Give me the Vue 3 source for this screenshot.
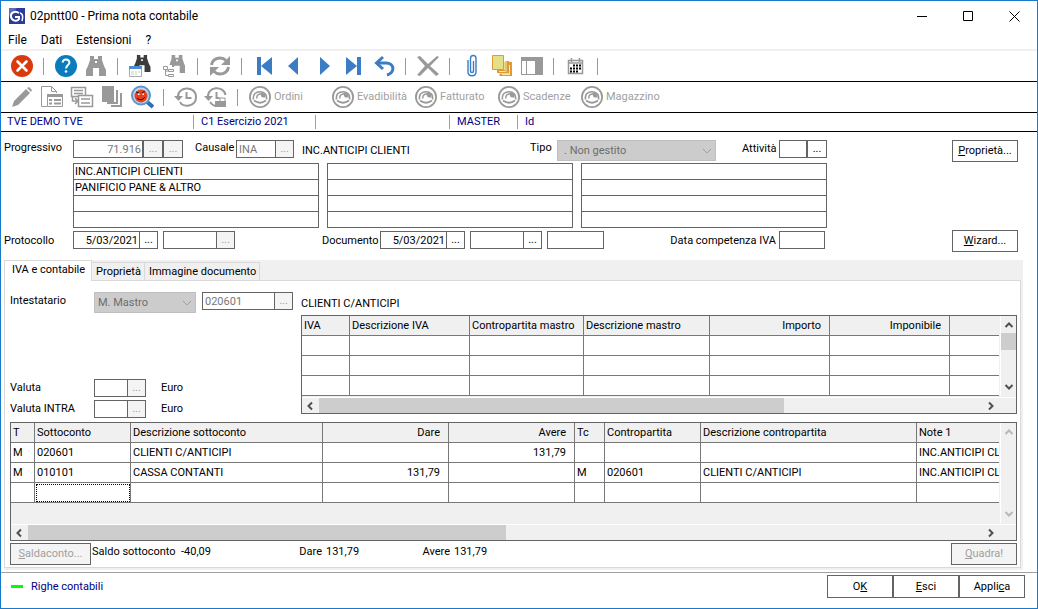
<script setup>
import { ref } from 'vue'

const menu = ['File', 'Dati', 'Estensioni', '?']

const mainTools = [
  { icon: 'close', label: 'Chiudi' }, null,
  { icon: 'help', label: 'Aiuto' }, { icon: 'find', label: 'Cerca' }, null,
  { icon: 'find-window', label: 'Cerca in finestra' }, { icon: 'find-tree', label: 'Cerca in albero', wide: true }, null,
  { icon: 'refresh', label: 'Aggiorna' }, null,
  { icon: 'first', label: 'Primo' }, { icon: 'prev', label: 'Precedente' }, { icon: 'next', label: 'Successivo' },
  { icon: 'last', label: 'Ultimo' }, { icon: 'undo', label: 'Annulla' }, null,
  { icon: 'delete', label: 'Elimina' }, null,
  { icon: 'clip', label: 'Allegati' }, { icon: 'notes', label: 'Note' }, { icon: 'panel', label: 'Pannello' }, null,
  { icon: 'calendar', label: 'Calendario' }, null,
]

const editTools = [
  { icon: 'pencil', label: 'Modifica' }, { icon: 'sheet', label: 'Scheda' }, { icon: 'forward', label: 'Riporta' },
  { icon: 'copies', label: 'Copie' }, { icon: 'inspect', label: 'Ispeziona' }, null,
  { icon: 'history', label: 'Storico' }, { icon: 'history-lock', label: 'Storico bloccato' }, null,
]

const links = ['Ordini', 'Evadibilità', 'Fatturato', 'Scadenze', 'Magazzino']

const notes = ref([
  ['INC.ANTICIPI CLIENTI', 'PANIFICIO PANE & ALTRO', '', ''],
  ['', '', '', ''],
  ['', '', '', ''],
])

const tabs = ['IVA e contabile', 'Proprietà', 'Immagine documento']
const activeTab = ref(0)

const ivaCols = [
  { label: 'IVA', width: 48 },
  { label: 'Descrizione IVA', width: 120 },
  { label: 'Contropartita mastro', width: 114 },
  { label: 'Descrizione mastro', width: 126 },
  { label: 'Importo', width: 120, num: true },
  { label: 'Imponibile', width: 120, num: true },
  { label: '', width: 120 },
]

const rowCols = [
  { label: 'T', width: 24 },
  { label: 'Sottoconto', width: 96 },
  { label: 'Descrizione sottoconto', width: 192 },
  { label: 'Dare', width: 126, num: true },
  { label: 'Avere', width: 126, num: true },
  { label: 'Tc', width: 30 },
  { label: 'Contropartita', width: 96 },
  { label: 'Descrizione contropartita', width: 216 },
  { label: 'Note 1', width: 192 },
]

const rows = [
  ['M', '020601', 'CLIENTI C/ANTICIPI', '', '131,79', '', '', '', 'INC.ANTICIPI CLIENTI'],
  ['M', '010101', 'CASSA CONTANTI', '131,79', '', 'M', '020601', 'CLIENTI C/ANTICIPI', 'INC.ANTICIPI CLIENTI'],
  ['', '', '', '', '', '', '', '', ''],
]
</script>

<template>
  <svg class="sprite" aria-hidden="true">
    <symbol id="close" viewBox="0 0 24 24">
      <circle cx="12" cy="12" r="11" fill="#d93a0b" />
      <path d="M7.500 7.500l9 9M16.500 7.500l-9 9" stroke="#fff" stroke-width="2.600" stroke-linecap="round" />
    </symbol>
    <symbol id="help" viewBox="0 0 24 24">
      <circle cx="12" cy="12" r="11" fill="#0a7cbc" />
      <path d="M8.500 8.500q.5-3 3.500-3t3.500 3c0 2.500-3.500 2.500-3.500 6" fill="none" stroke="#fff" stroke-width="2" />
      <circle cx="12" cy="17.500" r="1.300" fill="#fff" />
    </symbol>
    <symbol id="binoculars" viewBox="0 0 20 20">
      <path d="M4 0h4v3h4V0h4v4l2 6 2 4v6h-7v-8H7v8H0v-6l2-4 2-6z" />
      <path d="M9 5h2v2H9z" fill="#fff" />
    </symbol>
    <symbol id="find" viewBox="0 0 24 24">
      <use href="#binoculars" x="2" y="2" width="20" height="20" fill="#999" />
    </symbol>
    <symbol id="find-window" viewBox="0 0 24 24">
      <use href="#binoculars" x="5" y="1" width="18" height="17" fill="#3c3c3c" />
      <path d="M1.500 12.500h12v10h-12z" fill="#fff" stroke="#aaa" />
      <path d="M1 12h13v3H1z" fill="#4a8fd0" />
      <path d="M3 18h3M7 18h2M10 18h2M3 20h3M7 20h2" stroke="#c8c8c8" />
    </symbol>
    <symbol id="find-tree" viewBox="0 0 24 24">
      <use href="#binoculars" x="7" y="1" width="18" height="18" fill="#999" />
      <path d="M1 11h10v2h3v10H1z" fill="#fff" />
      <path d="M2.500 12.500h4v3h-4zM7.500 15.500h5v2h-5zM7.500 20.500h5v2h-5zM4.500 15.500v6h3M4.500 17h3" fill="none" stroke="#999" />
    </symbol>
    <symbol id="refresh" viewBox="0 0 24 24">
      <path d="M3.500 11C4 6.500 8 4 12 4c2.500 0 4.500 1 6 2.500M20.500 13c-.5 4.500-4.500 7-8.500 7-2.500 0-4.500-1-6-2.500" fill="none" stroke="#999" stroke-width="3" />
      <path d="M22 2v9h-9zM2 22v-9h9z" fill="#999" />
    </symbol>
    <symbol id="first" viewBox="0 0 24 24">
      <path d="M5 3h4v18H5zM20 3v18L9 12z" fill="#3b7cc4" />
    </symbol>
    <symbol id="prev" viewBox="0 0 24 24">
      <path d="M16 3v18L6 12z" fill="#3b7cc4" />
    </symbol>
    <symbol id="next" viewBox="0 0 24 24">
      <path d="M8 3v18l10-9z" fill="#3b7cc4" />
    </symbol>
    <symbol id="last" viewBox="0 0 24 24">
      <path d="M15 3h4v18h-4zM4 3v18l11-9z" fill="#3b7cc4" />
    </symbol>
    <symbol id="undo" viewBox="0 0 24 24">
      <path d="M5 9h9c9 0 9 10 1 12" fill="none" stroke="#3b7cc4" stroke-width="3" />
      <path d="M11 3L4.500 9l6.500 6" fill="none" stroke="#3b7cc4" stroke-width="3" />
    </symbol>
    <symbol id="delete" viewBox="0 0 24 24">
      <path d="M1 3l3-1 8 8 9-8 2 1-9 9 9 8-3 2-8-8-8 8-3-1 8-9z" fill="#999" />
    </symbol>
    <symbol id="clip" viewBox="0 0 24 24">
      <path d="M8 6v12c0 5 8 5 8 0V4.500c0-4-5.500-4-5.500 0V17c0 2 3 2 3 0V7" fill="none" stroke="#3b7cc4" stroke-width="1.400" />
    </symbol>
    <symbol id="notes" viewBox="0 0 24 24">
      <path d="M9 8h12v14H9z" fill="#e4e08a" />
      <path d="M15 7h4v12H7v-3h8z" fill="#e09a35" />
      <path d="M19 8h3v14H10v-2h9z" fill="#e09a35" />
      <path d="M9 17h6v1H9zM12 20h7v1h-7zM15.500 7h1v11h-1zM19 11h1v10h-1z" fill="#f0edb0" />
      <path d="M2.500 1.500h11v14h-11z" fill="#e4e08a" stroke="#e09a35" />
    </symbol>
    <symbol id="panel" viewBox="0 0 24 24">
      <path d="M1 3h22v18H1z" fill="#999" />
      <path d="M2 7h4v13H2zM7 7h8v13H7z" fill="#fff" />
    </symbol>
    <symbol id="calendar" viewBox="0 0 24 24">
      <path d="M4.500 6.500h14v13h-14zM4 9h15M7.500 4v4M15.500 4v4" fill="none" stroke="#999" stroke-width="1.500" />
      <path d="M9 11.500h9M6 14.500h12M6 17.500h8" stroke="#000" stroke-width="2" stroke-dasharray="2 1" />
    </symbol>
    <symbol id="pencil" viewBox="0 0 24 24">
      <path d="M2 22l2-6L16 4l4 4L8 20zM17 3l2-1 3 3-1 2z" fill="#999" />
    </symbol>
    <symbol id="sheet" viewBox="0 0 24 24">
      <path d="M7 21.500H1.500v-20h10l5 5V8M11.500 1.500v5h5" fill="none" stroke="#999" />
      <path d="M7.500 9.500h15v12h-15z" fill="#fff" stroke="#999" />
      <path d="M7 9h16v3H7z" fill="#999" />
      <path d="M9 15h3M9 18.500h3M14 15h7M14 18.500h7" stroke="#999" stroke-width="2" />
    </symbol>
    <symbol id="forward" viewBox="0 0 24 24">
      <path d="M1.500 2.500h14v9h-14z" fill="none" stroke="#999" stroke-width="1.500" />
      <path d="M4 5.500h9M4 8.500h9" stroke="#999" stroke-width="1.500" />
      <path d="M8.500 10.500h14v11h-14z" fill="#fff" stroke="#999" stroke-width="1.500" />
      <path d="M11 14h9M11 18h9" stroke="#999" stroke-width="1.500" />
      <path d="M2.500 12v4H7M5 13l3 3-3 3" fill="none" stroke="#999" stroke-width="1.500" />
    </symbol>
    <symbol id="copies" viewBox="0 0 24 24">
      <path d="M2 1h12v16H2zM16 5h2v14H7v-2h9zM20 8h2v14H11v-2h9z" fill="#999" />
    </symbol>
    <symbol id="inspect" viewBox="0 0 24 24">
      <path d="M16 16l7 6" stroke="#2f6fb5" stroke-width="4" />
      <circle cx="11" cy="10.500" r="9" fill="#b9d6ee" stroke="#5f95cc" stroke-width="2" />
      <circle cx="11" cy="11" r="6.500" fill="#e8401c" />
      <path d="M6 7l3 1M15 6l-3 2M7 13q4 4 8-1" fill="none" stroke="#3a0a00" />
      <path d="M8 8.500h1.500V10H8zM12.500 8.500H14V10h-1.500z" fill="#fff" />
    </symbol>
    <symbol id="history" viewBox="0 0 24 24">
      <path d="M4 13C2.500 1 22 0 22 12c0 10-13 11-16 5" fill="none" stroke="#999" stroke-width="2" />
      <path d="M0 11h9l-4.500 5z" fill="#999" />
      <path d="M12.500 7v6h5" fill="none" stroke="#999" stroke-width="2" />
    </symbol>
    <symbol id="history-lock" viewBox="0 0 24 24">
      <path d="M4 13C2.500 1 20 0 21.500 10M6 17q2 3 5 4" fill="none" stroke="#999" stroke-width="2" />
      <path d="M0 11h9l-4.500 5z" fill="#999" />
      <path d="M12.500 7v6h3" fill="none" stroke="#999" stroke-width="2" />
      <path d="M11 16h11v6H11z" fill="#999" />
      <path d="M16 16v-3h5v3" fill="none" stroke="#999" />
    </symbol>
    <symbol id="gauge" viewBox="0 0 24 24">
      <circle cx="12" cy="12" r="10.100" fill="none" stroke="#999" stroke-width="1.800" />
      <path d="M5.500 14.500C3.500 4 20.500 4 18.500 14.500" fill="none" stroke="#999" stroke-width="1.500" />
      <path d="M6 15.500q6 4.500 12 0" fill="none" stroke="#999" stroke-width="1.800" />
      <path d="M9 13.500q-1-3.500 3-4.500" fill="none" stroke="#999" stroke-width="1.500" />
      <path d="M11.500 8.500q3-2 6 1v3h-2.500q-2 0-2-2z" fill="#999" />
    </symbol>
    <symbol id="chevron" viewBox="0 0 10 10">
      <path d="M1 3l4 4 4-4" fill="none" stroke="currentColor" />
    </symbol>
    <symbol id="arrow-up" viewBox="0 0 10 10">
      <path d="M1.500 7L5 3.500 8.500 7" fill="none" stroke="currentColor" stroke-width="2" />
    </symbol>
    <symbol id="arrow-down" viewBox="0 0 10 10">
      <path d="M1.500 3L5 6.500 8.500 3" fill="none" stroke="currentColor" stroke-width="2" />
    </symbol>
    <symbol id="arrow-left" viewBox="0 0 10 10">
      <path d="M7 1.500L3.500 5 7 8.500" fill="none" stroke="currentColor" stroke-width="2" />
    </symbol>
    <symbol id="arrow-right" viewBox="0 0 10 10">
      <path d="M3 1.500L6.500 5 3 8.500" fill="none" stroke="currentColor" stroke-width="2" />
    </symbol>
  </svg>

  <div class="window">
    <header class="titlebar">
      <svg class="logo" viewBox="0 0 16 16" aria-hidden="true">
        <path d="M0 0h16v16H0z" fill="#2b3a9b" />
        <path d="M0 8l8-8H0z" fill="#5a6cc0" />
        <path d="M10 5C6 2 1 5 2 9s6 5 8 2V9H6" fill="none" stroke="#fff" stroke-width="2" />
        <path d="M11 5q4 1 2 8" fill="none" stroke="#fff" stroke-width="1.500" />
      </svg>
      <h1>02pntt00 - Prima nota contabile</h1>
      <div class="captions">
        <button type="button" aria-label="Riduci a icona">
          <svg viewBox="0 0 11 11"><path d="M0 5.500h10" stroke="#000" /></svg>
        </button>
        <button type="button" aria-label="Ingrandisci">
          <svg viewBox="0 0 11 11"><path d="M.5.5h9v9h-9z" fill="none" stroke="#000" /></svg>
        </button>
        <button type="button" aria-label="Chiudi finestra">
          <svg viewBox="0 0 11 11"><path d="M.5.5l10 10M10.500.5l-10 10" stroke="#000" /></svg>
        </button>
      </div>
    </header>

    <nav class="menu">
      <button v-for="item in menu" :key="item" type="button">{{ item }}</button>
    </nav>

    <div class="toolbar">
      <template v-for="(tool, i) in mainTools" :key="i">
        <button v-if="tool" type="button" class="tool" :class="{ wide: tool.wide }" :aria-label="tool.label">
          <svg><use :href="'#' + tool.icon" /></svg>
        </button>
        <span v-else class="sep"></span>
      </template>
    </div>

    <div class="toolbar">
      <template v-for="(tool, i) in editTools" :key="i">
        <button v-if="tool" type="button" class="tool" :aria-label="tool.label">
          <svg><use :href="'#' + tool.icon" /></svg>
        </button>
        <span v-else class="sep"></span>
      </template>
      <button v-for="link in links" :key="link" type="button" class="tool link">
        <svg><use href="#gauge" /></svg>
        {{ link }}
      </button>
    </div>

    <div class="info">
      <span class="company">TVE DEMO TVE</span>
      <span class="year">C1 Esercizio 2021</span>
      <span class="blank"></span>
      <span class="user">MASTER</span>
      <span>Id</span>
    </div>

    <section class="head">
      <div class="head-main">
        <label for="progressivo">Progressivo</label>
        <div class="line">
          <div class="field apart">
            <input id="progressivo" class="w70 num" value="71.916" disabled>
            <button type="button" disabled aria-label="Cerca progressivo">...</button>
            <button type="button" disabled aria-label="Altri progressivi">...</button>
          </div>
          <label for="causale" class="causale">Causale</label>
          <div class="field">
            <input id="causale" class="w40" value="INA" disabled>
            <button type="button" disabled aria-label="Cerca causale">...</button>
          </div>
          <span class="desc">INC.ANTICIPI CLIENTI</span>
          <label for="tipo" class="tipo">Tipo</label>
          <div class="select tipo-select">
            <select id="tipo" disabled>
              <option>. Non gestito</option>
            </select>
            <svg><use href="#chevron" /></svg>
          </div>
          <label for="attivita" class="attivita">Attività</label>
          <div class="field apart">
            <input id="attivita" class="w28">
            <button type="button" aria-label="Cerca attività">...</button>
          </div>
        </div>

        <div class="notes">
          <div v-for="(col, c) in notes" :key="c" class="note">
            <input v-for="(text, r) in col" :key="r" v-model="col[r]" :aria-label="`Nota ${c + 1}.${r + 1}`">
          </div>
        </div>

        <label for="protocollo" class="low">Protocollo</label>
        <div class="line">
          <div class="field">
            <input id="protocollo" class="w67 num" value="5/03/2021">
            <button type="button" aria-label="Scegli data protocollo">...</button>
          </div>
          <div class="field next">
            <input class="w54" aria-label="Numero protocollo">
            <button type="button" disabled aria-label="Cerca protocollo">...</button>
          </div>
          <label for="documento" class="documento low">Documento</label>
          <div class="field">
            <input id="documento" class="w67 num" value="5/03/2021">
            <button type="button" aria-label="Scegli data documento">...</button>
          </div>
          <div class="field next">
            <input class="w54" aria-label="Numero documento">
            <button type="button" aria-label="Cerca documento">...</button>
          </div>
          <div class="field next">
            <input class="w57" aria-label="Serie documento">
          </div>
          <label for="competenza" class="competenza low">Data competenza IVA</label>
          <div class="field competenza-field">
            <input id="competenza" class="w46">
          </div>
        </div>
      </div>
      <div class="head-side">
        <button type="button" class="btn"><span><u>P</u>roprietà...</span></button>
        <button type="button" class="btn"><span><u>W</u>izard...</span></button>
      </div>
    </section>

    <section class="tabs">
      <div class="tablist" role="tablist">
        <button
          v-for="(tab, i) in tabs"
          :key="tab"
          type="button"
          role="tab"
          :class="{ active: i === activeTab }"
          :aria-selected="i === activeTab"
          @click="activeTab = i"
        >{{ tab }}</button>
      </div>

      <div class="panel" role="tabpanel">
        <div class="upper">
          <div class="party">
            <label for="mastro">Intestatario</label>
            <div class="select mastro">
              <select id="mastro" disabled>
                <option>M. Mastro</option>
              </select>
              <svg><use href="#chevron" /></svg>
            </div>
            <div class="field code">
              <input class="w73" value="020601" aria-label="Codice intestatario" disabled>
              <button type="button" disabled aria-label="Cerca intestatario">...</button>
            </div>
            <label for="valuta">Valuta</label>
            <div class="field currency">
              <input id="valuta" class="w34">
              <button type="button" disabled aria-label="Cerca valuta">...</button>
              <span class="euro">Euro</span>
            </div>
            <label for="intra">Valuta INTRA</label>
            <div class="field currency">
              <input id="intra" class="w34">
              <button type="button" disabled aria-label="Cerca valuta INTRA">...</button>
              <span class="euro">Euro</span>
            </div>
          </div>

          <div class="iva">
            <p>CLIENTI C/ANTICIPI</p>
            <div class="grid">
              <div class="view">
                <table>
                  <colgroup>
                    <col v-for="(col, i) in ivaCols" :key="i" :style="{ width: col.width + 'px' }">
                  </colgroup>
                  <thead>
                    <tr>
                      <th v-for="(col, i) in ivaCols" :key="i" :class="{ num: col.num }">{{ col.label }}</th>
                    </tr>
                  </thead>
                  <tbody>
                    <tr v-for="r in 3" :key="r">
                      <td v-for="(col, i) in ivaCols" :key="i"></td>
                    </tr>
                  </tbody>
                </table>
              </div>
              <div class="vbar">
                <svg><use href="#arrow-up" /></svg>
                <span class="thumb"></span>
                <svg><use href="#arrow-down" /></svg>
              </div>
              <div class="hbar">
                <svg><use href="#arrow-left" /></svg>
                <span class="track"><span class="thumb" style="width: 70%"></span></span>
                <svg><use href="#arrow-right" /></svg>
              </div>
            </div>
          </div>
        </div>

        <div class="grid lower">
          <div class="view">
            <table>
              <colgroup>
                <col v-for="col in rowCols" :key="col.label" :style="{ width: col.width + 'px' }">
              </colgroup>
              <thead>
                <tr>
                  <th v-for="col in rowCols" :key="col.label" :class="{ num: col.num }">{{ col.label }}</th>
                </tr>
              </thead>
              <tbody>
                <tr v-for="(row, r) in rows" :key="r">
                  <td
                    v-for="(cell, c) in row"
                    :key="c"
                    :class="{ num: rowCols[c].num, current: r === 2 && c === 1 }"
                  >{{ cell }}</td>
                </tr>
              </tbody>
            </table>
          </div>
          <div class="vbar off">
            <svg><use href="#arrow-up" /></svg>
            <svg><use href="#arrow-down" /></svg>
          </div>
          <div class="hbar">
            <svg><use href="#arrow-left" /></svg>
            <span class="track"><span class="thumb" style="width: 50%"></span></span>
            <svg><use href="#arrow-right" /></svg>
          </div>
        </div>

        <div class="totals">
          <button type="button" class="btn saldaconto" disabled><span><u>S</u>aldaconto...</span></button>
          <span class="saldo">Saldo sottoconto</span>
          <span class="saldo-value">-40,09</span>
          <span class="total">Dare</span>
          <span class="total-value">131,79</span>
          <span class="total">Avere</span>
          <span class="total-value">131,79</span>
          <button type="button" class="btn quadra" disabled><span><u>Q</u>uadra!</span></button>
        </div>
      </div>
    </section>

    <footer class="footer">
      <span class="led"></span>
      <span class="status">Righe contabili</span>
      <button type="button" class="btn"><span>O<u>K</u></span></button>
      <button type="button" class="btn"><span><u>E</u>sci</span></button>
      <button type="button" class="btn"><span>Appli<u>c</u>a</span></button>
    </footer>
  </div>
</template>

<style>
body {
  margin: 0;
  background: #fff;
}
</style>

<style scoped>
* {
  box-sizing: border-box;
}

.sprite {
  position: absolute;
  width: 0;
  height: 0;
}

.window {
  display: flex;
  flex-direction: column;
  min-height: 100vh;
  border: 1px solid #1979ca;
  color: #000;
  font: 11px/16px Roboto, "Liberation Sans", sans-serif;
}

button,
input,
select {
  margin: 0;
  padding: 0;
  border: 0;
  border-radius: 0;
  background: none;
  color: inherit;
  font: inherit;
}

.titlebar {
  display: flex;
  align-items: center;
  height: 30px;
  padding-left: 8px;
}

.logo {
  width: 16px;
  height: 16px;
}

h1 {
  margin: 0 auto 0 5px;
  font-size: 12px;
  font-weight: 400;
}

.captions {
  display: flex;
}

.captions button {
  width: 46px;
  height: 28px;
}

.captions svg {
  display: block;
  width: 11px;
  height: 11px;
  margin: 0 auto;
}

.menu {
  display: flex;
  gap: 14px;
  height: 20px;
  padding-left: 7px;
  border-bottom: 2px solid #f0f0f0;
}

.menu button {
  font-size: 12px;
}

.toolbar {
  display: flex;
  height: 31px;
  padding-left: 6px;
  border-bottom: 1px solid #000;
}

.tool {
  display: flex;
  align-items: center;
  justify-content: center;
  width: 30px;
}

.tool svg {
  flex: none;
  width: 24px;
  height: 24px;
}

.tool.wide {
  width: 36px;
}

.tool.link {
  justify-content: flex-start;
  gap: 2px;
  width: 83px;
  padding-left: 3px;
  color: #a0a0a0;
}

.sep {
  align-self: center;
  width: 1px;
  height: 17px;
  margin: 0 7px 0 6px;
  background: #999;
}

.info {
  display: flex;
  align-items: center;
  height: 19px;
  padding-left: 6px;
  border-bottom: 1px solid #000;
  color: #000080;
  line-height: 14px;
}

.info span + span {
  padding-left: 7px;
  border-left: 1px solid #a0a0a0;
}

.info .company {
  width: 186px;
}

.info .year {
  width: 122px;
}

.info .blank {
  width: 134px;
  height: 14px;
}

.info .user {
  width: 68px;
}

.head {
  display: flex;
  justify-content: space-between;
  padding: 8px 19px 8px 3px;
}

.head-main {
  display: grid;
  grid-template-columns: 69px 1fr;
  row-gap: 2px;
  flex: 1;
  max-width: 823px;
  padding-bottom: 3px;
}

.head-side {
  display: flex;
  flex-direction: column;
  justify-content: space-between;
}

.line {
  display: flex;
  align-items: flex-start;
}

.low {
  padding-top: 2px;
}

.field {
  display: flex;
}

.field input {
  height: 18px;
  padding: 0 2px;
  border: 1px solid #646464;
  background: #fff;
}

.field input.num {
  padding-right: 1px;
  text-align: right;
}

.field button {
  width: 18px;
  height: 18px;
  border: 1px solid #646464;
  border-left: 0;
  line-height: 16px;
}

.field.apart button {
  width: 20px;
  border-left: 1px solid #646464;
}

.field button:disabled {
  background: #f4f4f4;
  color: #a0a0a0;
}

.field input:disabled {
  color: #787878;
}

.field.next {
  margin-left: 5px;
}

.w28 { width: 28px; }
.w34 { width: 34px; }
.w40 { width: 40px; }
.w46 { width: 46px; }
.w54 { width: 54px; }
.w57 { width: 57px; }
.w67 { width: 67px; }
.w70 { width: 70px; }
.w73 { width: 73px; }

.causale {
  width: 53px;
  padding-left: 12px;
}

.desc {
  flex: 1;
  padding: 3px 0 0 8px;
}

.tipo {
  width: 27px;
}

.attivita {
  width: 63px;
  padding: 1px 0 0 26px;
}

.select {
  position: relative;
}

.select select {
  width: 100%;
  height: 21px;
  padding: 0 3px;
  border: 1px solid #bfbfbf;
  background: #ccc;
  color: #6d6d6d;
  appearance: none;
  opacity: 1;
}

.select svg {
  position: absolute;
  top: 6px;
  right: 4px;
  width: 10px;
  height: 10px;
  color: #a0a0a0;
}

.tipo-select {
  width: 159px;
}

.tipo-select select {
  padding: 0 6px;
}

.notes {
  display: grid;
  grid-column: 2;
  grid-template-columns: repeat(3, 1fr);
  gap: 8px;
  padding-bottom: 1px;
}

.note {
  border: 1px solid #646464;
}

.note input {
  display: block;
  width: 100%;
  height: 16px;
  padding: 0 1px;
}

.note input:first-child {
  height: 15px;
}

.note input + input {
  border-top: 1px solid #646464;
}

.documento {
  width: 145px;
  padding-left: 87px;
}

.competenza {
  margin-left: auto;
  padding-right: 3px;
}

.competenza-field {
  margin-right: 2px;
}

.btn {
  width: 66px;
  height: 22px;
  border: 1px solid #646464;
  background: #fff;
}

.btn:disabled {
  background: #f4f4f4;
  color: #a0a0a0;
}

.tabs {
  margin: 0 14px 2px 3px;
  padding: 0 2px 2px 0;
  background: #f0f0f0;
}

.tablist {
  display: flex;
  align-items: flex-end;
  height: 20px;
}

.tablist button {
  height: 18px;
  padding: 0 3px 0 4px;
  border: 1px solid #d9d9d9;
  border-bottom: 0;
  border-left: 0;
}

.tablist .active {
  position: relative;
  height: 21px;
  margin-bottom: -1px;
  padding: 0 6px 2px 7px;
  border-left: 1px solid #d9d9d9;
  background: #fff;
}

.panel {
  padding: 11px 3px 2px 5px;
  border: 1px solid #d9d9d9;
  background: #fff;
}

.upper {
  display: flex;
  gap: 8px;
}

.party {
  display: grid;
  grid-template-columns: 84px 102px 97px;
  grid-template-rows: 87px 21px 18px;
}

.code {
  margin-left: 6px;
}

.currency {
  grid-column: 2 / 4;
}

.party label {
  padding-top: 1px;
}

.euro {
  padding: 1px 0 0 15px;
}

.iva {
  flex: 1;
  min-width: 0;
}

.iva p {
  margin: 0;
  padding: 4px 0 3px;
}

.grid {
  display: grid;
  grid-template-columns: 1fr 16px;
  column-gap: 1px;
  row-gap: 1px;
  border: 1px solid #646464;
  background: #f0f0f0;
}

.view {
  overflow: hidden;
}

table {
  width: 100%;
  border-spacing: 0;
  table-layout: fixed;
}

th,
td {
  height: 20px;
  padding: 0 2px;
  overflow: hidden;
  border-right: 1px solid #787878;
  border-bottom: 1px solid #787878;
  background: #fff;
  font-weight: 400;
  text-align: left;
  white-space: nowrap;
}

th:last-child,
td:last-child {
  border-right: 0;
}

th {
  background: #f0f0f0;
}

th.num,
td.num {
  padding-right: 8px;
  text-align: right;
}

td.current {
  outline: 1px dotted #000;
  outline-offset: -2px;
}

.vbar {
  display: flex;
  flex-direction: column;
  align-items: center;
  padding: 4px 0;
  border-left: 1px solid #fff;
  color: #505050;
}

.vbar svg,
.hbar svg {
  flex: none;
  width: 10px;
  height: 10px;
}

.vbar svg:last-child {
  margin-top: auto;
}

.vbar.off {
  color: #b8b8b8;
}

.vbar .thumb {
  width: 100%;
  height: 17px;
  margin-top: 3px;
  background: #cdcdcd;
}

.hbar {
  display: flex;
  grid-column: 1 / 3;
  align-items: center;
  height: 16px;
  padding: 0 20px 0 3px;
  border-top: 1px solid #fff;
  color: #505050;
}

.track {
  display: flex;
  flex: 1;
  margin: 0 3px 0 4px;
}

.track .thumb {
  height: 15px;
  background: #cdcdcd;
}

.lower {
  margin-top: 4px;
}

.lower .view {
  padding-bottom: 20px;
}

.totals {
  display: flex;
  padding-top: 2px;
}

.totals span {
  padding-top: 1px;
}

.btn span {
  padding: 0;
}

.saldaconto {
  width: 81px;
}

.totals .saldo {
  width: 90px;
  padding-left: 1px;
}

.saldo-value {
  width: 88px;
}

.total {
  width: 57px;
  padding-right: 4px;
  text-align: right;
}

.total-value {
  width: 71px;
}

.quadra {
  margin-left: auto;
}

.footer {
  display: flex;
  align-items: center;
  margin-top: auto;
  padding: 2px 12px 10px 10px;
  border-top: 1px solid #a0a0a0;
}

.footer .btn {
  height: 23px;
}

.led {
  width: 12px;
  height: 3px;
  background: #00ff00;
}

.status {
  margin-right: auto;
  padding-left: 8px;
  color: #000080;
}
</style>
